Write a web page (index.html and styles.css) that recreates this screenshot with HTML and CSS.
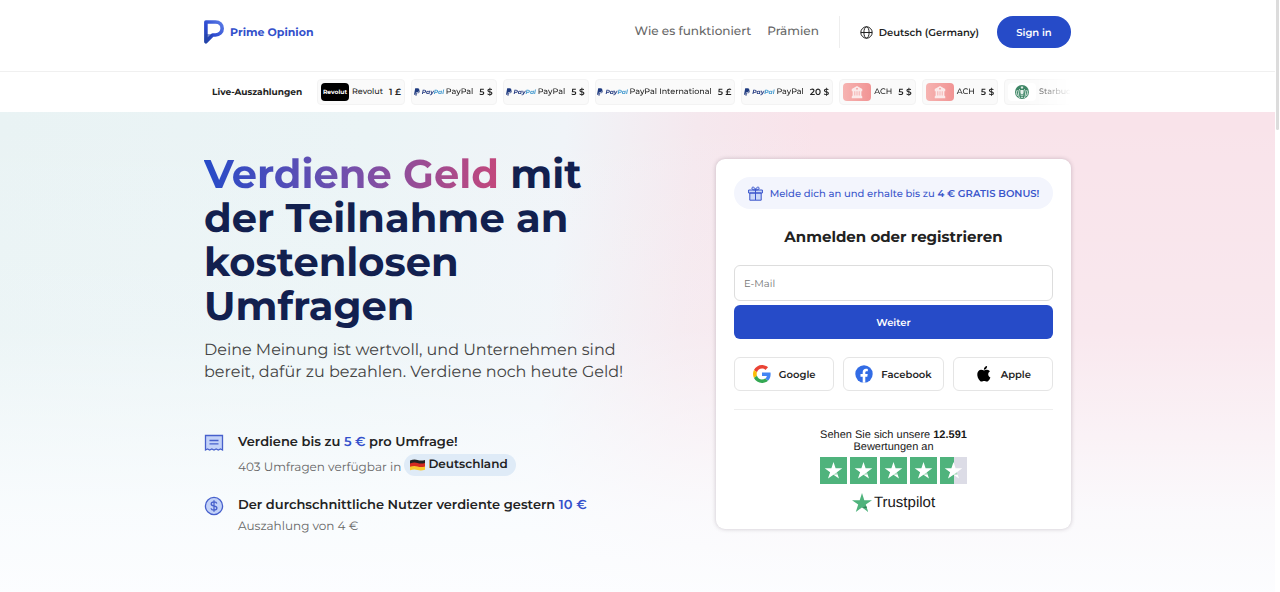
FILE: index.html
```html
<!DOCTYPE html>
<html lang="de">
<head>
<meta charset="utf-8">
<meta name="viewport" content="width=device-width, initial-scale=1">
<title>Prime Opinion</title>
<link rel="stylesheet" href="styles.css">
</head>
<body>
<svg class="defs" width="0" height="0" aria-hidden="true">
<defs>
<linearGradient id="logoFill" x1="0" y1="1" x2="1" y2="0"><stop offset="0" stop-color="#2444a8"/><stop offset=".4" stop-color="#2c49d0"/><stop offset="1" stop-color="#5a7be6"/></linearGradient>
<linearGradient id="halfFill"><stop offset=".5" stop-color="#4fb37c"/><stop offset=".5" stop-color="#dcdce6"/></linearGradient>
</defs>
<symbol id="paypal" viewBox="0 0 8 10"><path fill="#1f3b80" d="M1.6 0h3.2C6.700 0 7.400 1.100 7 2.800 6.500 4.900 5.200 5.800 3.400 5.800H2.500L1.900 8.700H0z"/><path fill="#253b80" opacity=".8" d="M7.300 2.200C8 2.700 8 3.500 7.800 4.200 7.400 6 6.200 6.700 4.600 6.700H4L3.400 10H1.800L2.500 6.300h1.300C5.700 6.300 6.900 4.800 7.300 2.200z"/></symbol>
<symbol id="bank" viewBox="0 0 16 16"><path fill="#fbe9e9" d="M8 1l6 3.500V7h-1v5l1 1v2H2v-2l1-1V7H2V4.500z"/><path fill="#f3a9a9" d="M5 7h1v5H5zM7.500 7h1v5h-1zM10 7h1v5h-1zM7 3.500h2v1.500H7z"/></symbol>
<symbol id="star" viewBox="0 0 27 27"><path fill="#fff" d="M13.500 5l2.100 6.300h6.700l-5.400 4 2.100 6.300-5.500-3.900L8 21.600l2.100-6.300-5.400-4h6.700z"/><path fill="#4fb37c" opacity=".5" d="M16.900 15.300l.7 2.100-4.100.3z"/></symbol>
</svg>

<header class="header">
<div class="container header-row">
<a class="brand" href="#">
<svg width="20" height="24" viewBox="0 0 20 24"><path fill="none" stroke="url(#logoFill)" stroke-width="3.600" stroke-linejoin="round" d="M1.900 2H11.500C15.500 2 18.200 4.800 18.200 8.400S15.500 15 11.500 15H8.600L1.900 21.800V2z"/><path fill="#2444a8" d="M1.500 22.500V14l7.500.2z" opacity=".6"/></svg>
<span>Prime Opinion</span>
</a>
<nav class="nav">
<a href="#">Wie es funktioniert</a>
<a href="#">Prämien</a>
</nav>
<button class="language" type="button">
<svg width="13" height="13" viewBox="0 0 13 13" fill="none" stroke="#222"><circle cx="6.500" cy="6.500" r="5.700"/><ellipse cx="6.500" cy="6.500" rx="2.600" ry="5.700"/><path d="M.8 6.500h11.400"/></svg>
<span>Deutsch (Germany)</span>
</button>
<button class="sign-in" type="button">Sign in</button>
</div>
</header>

<section class="ticker">
<div class="container ticker-row">
<strong class="ticker-title">Live-Auszahlungen</strong>
<ul class="payouts">
<li><span class="logo revolut">Revolut</span><span>Revolut</span><b>1 £</b></li>
<li><span class="logo paypal"><svg width="6" height="8"><use href="#paypal"/></svg><i>Pay<em>Pal</em></i></span><span>PayPal</span><b>5 $</b></li>
<li><span class="logo paypal"><svg width="6" height="8"><use href="#paypal"/></svg><i>Pay<em>Pal</em></i></span><span>PayPal</span><b>5 $</b></li>
<li><span class="logo paypal"><svg width="6" height="8"><use href="#paypal"/></svg><i>Pay<em>Pal</em></i></span><span>PayPal International</span><b>5 £</b></li>
<li><span class="logo paypal"><svg width="6" height="8"><use href="#paypal"/></svg><i>Pay<em>Pal</em></i></span><span>PayPal</span><b>20 $</b></li>
<li><span class="logo ach"><svg width="14" height="14"><use href="#bank"/></svg></span><span>ACH</span><b>5 $</b></li>
<li><span class="logo ach"><svg width="14" height="14"><use href="#bank"/></svg></span><span>ACH</span><b>5 $</b></li>
<li><span class="logo starbucks"><svg width="14" height="14" viewBox="0 0 14 14"><circle cx="7" cy="7" r="7" fill="#3d8565"/><path fill="none" stroke="#e8f2ec" stroke-width=".9" d="M4.500 13C3 10 3.500 5 5 4M9.500 13C11 10 10.500 5 9 4M2.500 11C1 8 1.500 6 2.500 5M11.500 11C13 8 12.500 6 11.500 5M5.500 10c1 1 2 1 3 0M6 13c0-1 2-1 2 0"/><path fill="#e8f2ec" d="M7 .8l.5 1 1.100.1-.8.8.2 1L7 3.200l-1 .5.200-1-.8-.8 1.100-.1zM5.400 5h3.200v2.500C8.600 9 7.500 9.500 7 9.500S5.400 9 5.400 7.500z"/></svg></span><span>Starbucks</span></li>
</ul>
</div>
</section>

<main class="hero">
<div class="container hero-row">
<section class="intro">
<h1><span class="highlight">Verdiene Geld</span> mit<br>der Teilnahme an<br>kostenlosen<br>Umfragen</h1>
<p class="lead">Deine Meinung ist wertvoll, und Unternehmen sind<br>bereit, dafür zu bezahlen. Verdiene noch heute Geld!</p>
<ul class="facts">
<li>
<svg width="20" height="20" viewBox="0 0 20 20" fill="#c3d2f8" stroke="#4760cc" stroke-width="1.300"><path d="M1.500 2.500h17v14.500l-2-1-2.200 1-2.100-1-2.200 1-2.200-1-2.100 1-2.200-1-2 1z"/><path d="M5.500 7.500h9M5.500 10.800h9"/></svg>
<div>
<h2>Verdiene bis zu <b>5 €</b> pro Umfrage!</h2>
<p>403 Umfragen verfügbar in <span class="country"><svg width="15" height="12" viewBox="0 0 15 12"><path fill="#222" d="M0 1.500Q4 0 7.500 1T15 1v4H0z"/><path fill="#d42a20" d="M0 4.500Q4 3 7.500 4T15 4v4H0z"/><path fill="#f7c82e" d="M0 7.800Q4 6.500 7.500 7.500T15 7.500v3.300Q11 12 7.500 11T0 11.300z"/></svg>Deutschland</span></p>
</div>
</li>
<li>
<svg width="20" height="20" viewBox="0 0 20 20" fill="none" stroke="#4760cc" stroke-width="1.300"><circle cx="10" cy="10" r="8.600" fill="#c3d2f8"/><path d="M12.800 7.500C12.500 6.300 11.500 5.900 10 5.900S7.200 6.600 7.200 7.900 8.500 9.700 10 10s2.900.8 2.900 2.100-1.200 2-2.900 2-2.700-.6-3-1.800M10 4.200v11.600"/></svg>
<div>
<h2>Der durchschnittliche Nutzer verdiente gestern <b>10 €</b></h2>
<p>Auszahlung von 4 €</p>
</div>
</li>
</ul>
</section>

<section class="card">
<div class="bonus">
<svg width="15" height="15" viewBox="0 0 15 15" fill="#cbd8f8" stroke="#3a55cb"><path d="M1.800 7h11.400v7.200H1.800zM.6 4h13.800v3H.6zM7.500 4v10M7.500 4C5 4 3.800 3.300 3.800 2.100S6.800.2 7.500 4zM7.500 4C10 4 11.200 3.300 11.200 2.100S8.200.2 7.500 4z"/></svg>
<span>Melde dich an und erhalte bis zu <b>4 € GRATIS BONUS!</b></span>
</div>
<h2 class="card-title">Anmelden oder registrieren</h2>
<form class="signup">
<input type="email" placeholder="E-Mail" aria-label="E-Mail">
<button class="submit" type="submit">Weiter</button>
</form>
<div class="socials">
<button type="button"><svg width="18" height="18" viewBox="0 0 48 48"><path fill="#ea4335" d="M24 9.500c3.540 0 6.710 1.220 9.210 3.600l6.850-6.850C35.900 2.380 30.470 0 24 0 14.620 0 6.510 5.380 2.560 13.220l7.980 6.190C12.430 13.720 17.740 9.500 24 9.500z"/><path fill="#4285f4" d="M46.980 24.550c0-1.570-.15-3.090-.38-4.550H24v9.020h12.940c-.58 2.960-2.260 5.480-4.780 7.180l7.730 6c4.510-4.180 7.090-10.360 7.090-17.650z"/><path fill="#fbbc05" d="M10.530 28.590A14.500 14.500 0 0 1 9.770 24c0-1.600.27-3.140.76-4.590l-7.980-6.190A24 24 0 0 0 0 24c0 3.880.92 7.540 2.560 10.780z"/><path fill="#34a853" d="M24 48c6.480 0 11.930-2.130 15.890-5.810l-7.730-6c-2.150 1.450-4.920 2.300-8.160 2.300-6.260 0-11.570-4.220-13.470-9.910l-7.980 6.190C6.510 42.620 14.620 48 24 48z"/></svg>Google</button>
<button type="button"><svg width="18" height="18" viewBox="0 0 18 18"><circle cx="9" cy="9" r="8.700" fill="#326ce5"/><path fill="#fff" d="M7.700 17.700v-6H5.500V9.100h2.200V7.200c0-2.200 1.300-3.400 3.300-3.400.7 0 1.500.1 1.800.2v2.200h-1.100c-1.100 0-1.400.6-1.400 1.300v1.600h2.400l-.4 2.600h-2v6z"/></svg>Facebook</button>
<button type="button"><svg width="18" height="18" viewBox="0 0 24 24"><path d="M17.050 20.280c-.98.950-2.050.8-3.080.35-1.090-.46-2.090-.48-3.240 0-1.440.62-2.200.44-3.060-.35C2.790 15.250 3.510 7.590 9.050 7.310c1.350.07 2.290.74 3.080.8 1.180-.24 2.310-.93 3.570-.84 1.510.12 2.650.72 3.400 1.800-3.120 1.870-2.380 5.980.48 7.130-.57 1.500-1.310 2.990-2.540 4.090zM12.030 7.250c-.15-2.230 1.660-4.070 3.740-4.250.29 2.580-2.340 4.500-3.740 4.250z" transform="translate(-2 -2) scale(1.150)"/></svg>Apple</button>
</div>
<div class="trust">
<p>Sehen Sie sich unsere <b>12.591</b><br><span>Bewertungen</span> an</p>
<div class="stars" role="img" aria-label="4,5 von 5 Sternen">
<svg width="27" height="27"><rect width="27" height="27" fill="#4fb37c"/><use href="#star"/></svg>
<svg width="27" height="27"><rect width="27" height="27" fill="#4fb37c"/><use href="#star"/></svg>
<svg width="27" height="27"><rect width="27" height="27" fill="#4fb37c"/><use href="#star"/></svg>
<svg width="27" height="27"><rect width="27" height="27" fill="#4fb37c"/><use href="#star"/></svg>
<svg width="27" height="27"><rect width="27" height="27" fill="url(#halfFill)"/><use href="#star"/></svg>
</div>
<a class="trustpilot" href="#"><svg width="20" height="20" viewBox="0 0 20 20"><path fill="#4fb37c" d="M10 0l2.300 7.200H20l-6.200 4.400 2.400 7.300L10 14.400l-6.200 4.500 2.400-7.300L0 7.200h7.700z"/><path fill="#2f7a54" d="M14.300 13.200l.6 1.900-4.900-.7z"/></svg>Trustpilot</a>
</div>
</section>
</div>
</main>
<div class="scroll-thumb"></div>
</body>
</html>
```
FILE: styles.css
```css
* {box-sizing: border-box;}
body {margin: 0; padding-right: 5px; min-height: 100vh; display: flex; flex-direction: column; background: #fff; color: #222; font-family: Montserrat, Inter, sans-serif; font-size: 12px; text-rendering: geometricPrecision;}
h1, h2, p, ul {margin: 0; padding: 0;}
ul {list-style: none;}
a {color: inherit; text-decoration: none;}
button, input {font-family: inherit; margin: 0; text-rendering: inherit;}
button {cursor: pointer;}
svg {flex: none; display: block;}
.defs {position: absolute;}
.container {width: 100%; max-width: 867px; margin: 0 auto;}

/* header */
.header {border-bottom: 1px solid #f0f0f0; padding: 16px 0 23px;}
.header-row {display: flex; align-items: center; height: 32px;}
.brand {display: flex; align-items: center; gap: 6px; color: #3350cb; font-size: 11px; font-weight: 700;}
.nav {display: flex; gap: 16px; margin-left: auto; padding-right: 20px; margin-right: 20px; border-right: 1px solid #eee; color: #666; font-size: 12px; line-height: 32px; font-weight: 500;}
.language {display: flex; align-items: center; gap: 6px; padding: 0; margin-right: 18px; border: 0; background: none; color: #222; font-size: 11px; font-weight: 600;}
.sign-in {width: 74px; height: 32px; border: 0; border-radius: 16px; background: #264bc8; color: #fff; font-size: 10px; font-weight: 600;}
.language {font-size: 10px;}

/* live payouts */
.ticker-row {display: flex; align-items: center; height: 40px; padding-left: 8px;}
.ticker-title {flex: none; width: 105px; font-size: 9px; font-weight: 700;}
.payouts {flex: 1; display: flex; gap: 6px; overflow: hidden; mask-image: linear-gradient(to right, #000 94%, transparent);}
.payouts li {flex: none; display: flex; align-items: center; height: 26px; padding: 0 3px; border: 1px solid #f3f3f3; border-radius: 4px; background: #fafafa; font-size: 8px; font-weight: 500; white-space: nowrap;}
.payouts b {margin-left: 6px; font-size: 9px; font-weight: 600;}
.logo {display: flex; align-items: center; justify-content: center; width: 28px; height: 18px; margin-right: 3px; border-radius: 4px;}
.revolut {background: #000; color: #fff; font-size: 6px; font-weight: 700;}
.paypal {gap: 2px; color: #253b80; font-size: 6px; font-weight: 700;}
.paypal em {color: #459bd0;}
.ach {background: linear-gradient(to right, #f6b3b1, #f19494);}
.starbucks {background: #fff;}

/* hero */
.hero {flex: 1; padding: 41px 0 62px; background: linear-gradient(to bottom, rgba(249, 252, 255, 0) 0, rgba(249, 252, 255, .2) 45%, rgba(251, 253, 255, .85) 82%, #fcfdff), linear-gradient(95deg, #e9f3f4 0, #ebf4f6 28%, #f0f4f8 43%, #f5e8ee 53%, #f9e3ea 62%, #f9e3ea 100%);}
.hero-row {display: flex; justify-content: space-between; align-items: flex-start;}
h1 {color: #12204f; font-size: 40px; line-height: 44px; font-weight: 700;}
.highlight {background: linear-gradient(to right, #264bc8, #7550ab 50%, #c3487c); background-clip: text; -webkit-background-clip: text; color: transparent;}
.lead {margin-top: 11px; color: #444; font-size: 16px; line-height: 22px;}
.facts {display: grid; gap: 16px; margin-top: 47px;}
.facts li {display: flex; gap: 14px;}
.facts li > svg {margin-top: 2px;}
.facts h2 {font-size: 13px; line-height: 22px; font-weight: 600;}
.facts h2 b {color: #3350cb; font-weight: 600;}
.facts p {margin-top: 1px; color: #666; font-size: 12px; line-height: 20px;}
.country {display: inline-flex; align-items: center; gap: 3px; height: 22px; padding: 0 8px 0 6px; border-radius: 11px; background: #dfebf7; color: #222; font-size: 12px; font-weight: 600;}

/* sign-up card */
.card {width: 355px; margin-top: 6px; padding: 18px 18px 15px; border-radius: 9px; background: #fff; box-shadow: 0 0 4px rgba(60, 40, 60, .25);}
.bonus {display: flex; align-items: center; justify-content: center; gap: 7px; height: 32px; border-radius: 16px; background: #f3f5fd; color: #3a55cb; font-size: 10px; font-weight: 500; white-space: nowrap;}
.bonus b {font-weight: 600;}
.card-title {margin: 18px 0; text-align: center; font-size: 15px; line-height: 20px; font-weight: 700;}
.signup {display: grid; gap: 4px;}
.signup input {width: 100%; height: 36px; padding: 0 9px; border: 1px solid #ddd; border-radius: 6px; font-size: 10px;}
.signup input::placeholder {color: #757575;}
.submit {height: 34px; border: 0; border-radius: 6px; background: #264bc8; color: #fff; font-size: 10px; font-weight: 600;}
.socials {display: grid; grid-template-columns: repeat(3, 1fr); gap: 9px; margin-top: 18px; padding-bottom: 18px; border-bottom: 1px solid #eee;}
.socials button {display: flex; align-items: center; justify-content: center; gap: 8px; height: 34px; padding: 0; border: 1px solid #e5e5e5; border-radius: 6px; background: #fff; color: #222; font-size: 10px; font-weight: 600;}
.trust {display: flex; flex-direction: column; align-items: center; padding-top: 19px; color: #191919; font-family: "Liberation Sans", sans-serif;}
.trust p {text-align: center; font-size: 11px; line-height: 12px;}
.stars {display: flex; gap: 3px; margin-top: 4px;}
.trustpilot {display: flex; align-items: center; gap: 2px; margin-top: 8px; font-size: 15px; line-height: 22px;}

.scroll-thumb {position: fixed; top: 0; right: 1px; width: 3px; height: 130px; border-radius: 0 0 2px 2px; background: #dcdcdc;}
```
